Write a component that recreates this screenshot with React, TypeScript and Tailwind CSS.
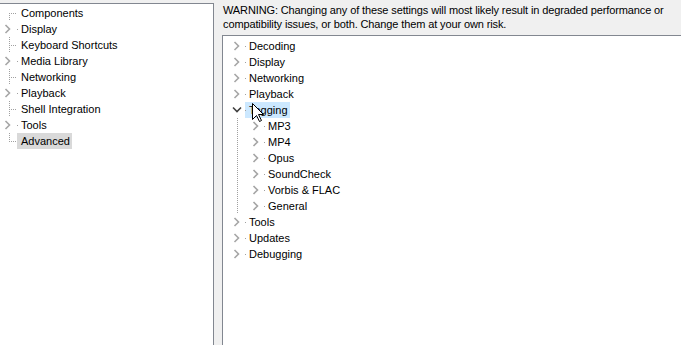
type Node = { label: string; kids?: boolean; open?: boolean };

const leftItems: Node[] = [
  { label: "Components" },
  { label: "Display", kids: true },
  { label: "Keyboard Shortcuts" },
  { label: "Media Library", kids: true },
  { label: "Networking" },
  { label: "Playback", kids: true },
  { label: "Shell Integration" },
  { label: "Tools", kids: true },
  { label: "Advanced" },
];

const rightTop: Node[] = [
  { label: "Decoding", kids: true },
  { label: "Display", kids: true },
  { label: "Networking", kids: true },
  { label: "Playback", kids: true },
];

const tagging = ["MP3", "MP4", "Opus", "SoundCheck", "Vorbis & FLAC", "General"];
const rightBottom = ["Tools", "Updates", "Debugging"];

function Closed({ x }: { x: number }) {
  return (
    <path
      d={`M${x + 0.5} 4 L${x + 4.5} 8 L${x + 0.5} 12`}
      stroke="#a6a6a6"
      strokeWidth="1.6"
      fill="none"
    />
  );
}

function Open({ x }: { x: number }) {
  return (
    <path
      d={`M${x - 4} 5.5 L${x} 9.5 L${x + 4} 5.5`}
      stroke="#404040"
      strokeWidth="1.6"
      fill="none"
    />
  );
}

function Label({ text, sel }: { text: string; sel?: string }) {
  return (
    <span className={`relative h-[16px] flex items-center pl-[4px] pr-[2px] ${sel ?? ""}`}>
      <span className="absolute left-0 top-[8px] w-[1px] h-[1px] bg-[#a0a0a0]" />
      {text}
    </span>
  );
}

// linke Seite (Einstellungsbaum)
function LeftRow({ item, i }: { item: Node; i: number }) {
  const last = i === leftItems.length - 1;
  const first = i === 0;
  return (
    <div className="relative h-[16px] flex items-center">
      <svg width="17" height="16" className="shrink-0">
        {item.kids ? (
          <Closed x={5} />
        ) : (
          <g fill="#a0a0a0">
            {[0, 2, 4, 6, 8, 10, 12, 14].map((y) =>
              (first && y < 8) || (last && y > 8) ? null : (
                <rect key={y} x={9} y={y} width={1} height={1} />
              ),
            )}
            {[11, 13, 15].map((x) => (
              <rect key={x} x={x} y={8} width={1} height={1} />
            ))}
          </g>
        )}
      </svg>
      {item.kids ? (
        <Label text={item.label} />
      ) : (
        <span className={`h-[16px] flex items-center pl-[4px] pr-[2px] ${last ? "bg-[#d9d9d9]" : ""}`}>
          {item.label}
        </span>
      )}
    </div>
  );
}

function Cursor() {
  return (
    <svg width="13" height="20" className="absolute left-[252px] top-[103px]">
      <path
        d="M0.5 0.5 L0.5 16.5 L4.5 12.5 L7.5 18.5 L9.5 17.5 L6.5 11.5 L11.5 11.5 Z"
        fill="#fff"
        stroke="#000"
        strokeWidth="1"
      />
    </svg>
  );
}

export default function App() {
  return (
    <div className="relative w-[681px] h-[345px] bg-[#f0f0f0] flex overflow-hidden font-['Liberation_Sans',sans-serif] text-[11px] text-black">
      {/* Links */}
      <div className="w-[214px] mt-[3px] bg-white border-t border-r border-[#828790] pt-[1px]">
        {leftItems.map((it, i) => (
          <LeftRow key={it.label} item={it} i={i} />
        ))}
      </div>

      {/* Rechts */}
      <div className="ml-[8px] flex-1 flex flex-col">
        <p className="h-[35px] pl-[1px] pt-[3px] leading-[14px] tracking-[-0.12px]">
          WARNING: Changing any of these settings will most likely result in degraded performance or
          <br />
          compatibility issues, or both. Change them at your own risk.
        </p>
        <div className="flex-1 bg-white border-t border-l border-[#828790] pt-[2px]">
          {rightTop.map((it) => (
            <div key={it.label} className="h-[16px] flex items-center">
              <svg width="22" height="16" className="shrink-0">
                <Closed x={11} />
              </svg>
              <Label text={it.label} />
            </div>
          ))}

          <div className="h-[16px] flex items-center">
            <svg width="22" height="16" className="shrink-0">
              <Open x={14} />
            </svg>
            <Label text="Tagging" sel="bg-[#cce8ff]" />
          </div>

          {tagging.map((t) => (
            <div key={t} className="h-[16px] flex items-center">
              <svg width="41" height="16" className="shrink-0">
                <g fill="#a0a0a0">
                  {[0, 2, 4, 6, 8, 10, 12, 14].map((y) => (
                    <rect key={y} x={14} y={y} width={1} height={1} />
                  ))}
                </g>
                <Closed x={30} />
              </svg>
              <Label text={t} />
            </div>
          ))}

          {rightBottom.map((t) => (
            <div key={t} className="h-[16px] flex items-center">
              <svg width="22" height="16" className="shrink-0">
                <Closed x={11} />
              </svg>
              <Label text={t} />
            </div>
          ))}
        </div>
      </div>

      <Cursor />
    </div>
  );
}
